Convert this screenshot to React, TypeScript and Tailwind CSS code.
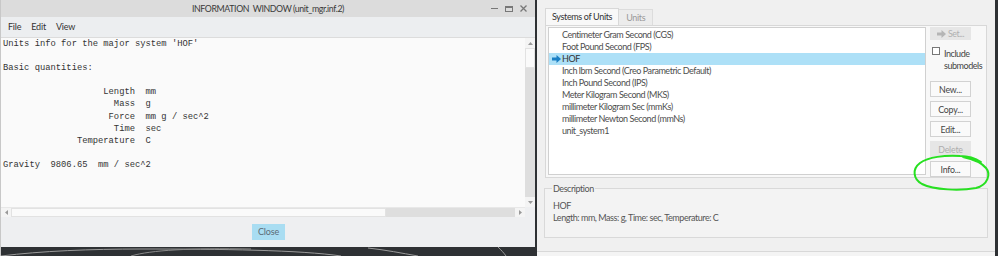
import React from "react";

const mono = { fontFamily: '"Liberation Mono", "DejaVu Sans Mono", monospace' };
const ui = { fontFamily: 'Lato, "Open Sans", sans-serif' };

const infoText = `Units info for the major system 'HOF'

Basic quantities:

                   Length  mm
                     Mass  g
                    Force  mm g / sec^2
                     Time  sec
              Temperature  C

Gravity  9806.65  mm / sec^2`;

function BlueArrow({ color = "#1a7fc4" }: { color?: string }) {
  return (
    <svg width="9" height="8" viewBox="0 0 9 8">
      <path d="M0 2.5 H4.5 V0 L9 4 L4.5 8 V5.5 H0 Z" fill={color} />
    </svg>
  );
}

function LeftWindow() {
  return (
    <div className="w-[535px] h-full flex flex-col shrink-0 border-l border-[#c8c8c8]" style={ui}>
      {/* title bar */}
      <div className="h-[17px] bg-[#dcdcdc] flex items-center relative">
        <div className="flex-1 text-center text-[8.8px] tracking-[-0.4px] text-[#3a3a3a] pl-[44px]">INFORMATION&nbsp;&nbsp;WINDOW (unit_mgr.inf.2)</div>
        <div className="flex items-center gap-[7px] pr-[8px] text-[#666]">
          <div className="w-[7px] h-[1.5px] bg-[#777]" />
          <div className="w-[8px] h-[6px] border border-[#777] border-t-2" />
          <svg width="7" height="7" viewBox="0 0 7 7"><path d="M0.5 0.5 L6.5 6.5 M6.5 0.5 L0.5 6.5" stroke="#777" strokeWidth="1.3" /></svg>
        </div>
      </div>
      {/* menu bar */}
      <div className="h-[21px] bg-[#eceef0] border-b border-[#dcdcdc] flex items-center gap-[10px] pl-[7px] text-[9px] tracking-[-0.2px] text-[#333]">
        <span>File</span>
        <span>Edit</span>
        <span>View</span>
      </div>
      {/* text + vscroll */}
      <div className="flex h-[169px]">
        <div className="flex-1 bg-[#fafafa] pl-[2px] pt-[0px] overflow-hidden">
          <pre className="text-[8.8px] leading-[12.1px] text-[#333]" style={mono}>{infoText}</pre>
        </div>
        <div className="w-[10px] bg-[#dedede] flex flex-col">
          <div className="h-[10px] bg-[#f4f4f4] flex items-center justify-center">
            <svg width="5" height="3" viewBox="0 0 5 3"><path d="M0 3 L2.5 0 L5 3 Z" fill="#999" /></svg>
          </div>
          <div className="h-[20px] bg-[#fafafa] border border-[#e2e2e2]" />
          <div className="flex-1" />
          <div className="h-[10px] bg-[#f4f4f4] flex items-center justify-center">
            <svg width="5" height="3" viewBox="0 0 5 3"><path d="M0 0 L2.5 3 L5 0 Z" fill="#999" /></svg>
          </div>
        </div>
      </div>
      {/* hscroll */}
      <div className="flex h-[10px] bg-[#eeeff1]">
        <div className="w-[524px] flex bg-[#dedede] border-t border-[#e8e8e8]">
          <div className="w-[10px] bg-[#f4f4f4] flex items-center justify-center">
            <svg width="3" height="5" viewBox="0 0 3 5"><path d="M3 0 L0 2.5 L3 5 Z" fill="#999" /></svg>
          </div>
          <div className="w-[375px] bg-[#fafafa] border border-[#e2e2e2]" />
          <div className="flex-1" />
          <div className="w-[10px] bg-[#f4f4f4] flex items-center justify-center">
            <svg width="3" height="5" viewBox="0 0 3 5"><path d="M0 0 L3 2.5 L0 5 Z" fill="#999" /></svg>
          </div>
        </div>
      </div>
      {/* bottom */}
      <div className="h-[30px] bg-[#eeeff1] flex items-center justify-center">
        <div className="w-[33px] h-[16px] bg-[#a9ddf2] text-[9px] tracking-[-0.2px] text-[#5b6b76] flex items-center justify-center ml-[1px]">Close</div>
      </div>
      {/* desktop strip */}
      <div className="flex-1 bg-[#2e3134]">
        <svg width="535" height="9" viewBox="0 0 535 9">
          <path d="M0 9 C 40 4, 90 2, 140 2 C 220 2, 300 3, 340 9" stroke="#9a9a9a" strokeWidth="1" fill="none" />
          <path d="M130 9 C 150 3, 190 1, 250 2" stroke="#8a8a8a" strokeWidth="1" fill="none" />
          <path d="M367 1 C 385 3, 400 6, 417 9" stroke="#9a9a9a" strokeWidth="1" fill="none" />
          <path d="M497 0 C 500 3, 503 6, 505 9" stroke="#9a9a9a" strokeWidth="1" fill="none" />
        </svg>
      </div>
    </div>
  );
}

const units = [
  "Centimeter Gram Second (CGS)",
  "Foot Pound Second (FPS)",
  "HOF",
  "Inch lbm Second (Creo Parametric Default)",
  "Inch Pound Second (IPS)",
  "Meter Kilogram Second (MKS)",
  "millimeter Kilogram Sec (mmKs)",
  "millimeter Newton Second (mmNs)",
  "unit_system1",
];

function Btn({ label, disabled }: { label: string; disabled?: boolean }) {
  return (
    <div
      className={
        disabled
          ? "w-[41px] h-[16px] bg-[#e6e6e6] border border-[#e6e6e6] text-[#adadad] text-[8.8px] tracking-[-0.2px] flex items-center justify-center"
          : "w-[41px] h-[16px] bg-[#fafafa] border border-[#d2d2d2] text-[#444] text-[8.8px] tracking-[-0.2px] flex items-center justify-center"
      }
    >
      {label}
    </div>
  );
}

function RightDialog() {
  return (
    <div className="w-[458px] h-full bg-[#f0f0f0] flex flex-col shrink-0 text-[8.8px] tracking-[-0.45px]" style={ui}>
      <div className="pl-[8px] pr-[8px] pt-[8px] flex flex-col">
        {/* tabs */}
        <div className="flex h-[17px] text-[9px] tracking-[-0.35px]">
          <div className="px-[6px] bg-[#f8f8f8] border border-b-0 border-[#d8d8d8] text-[#333] flex items-center">Systems of Units</div>
          <div className="px-[7px] bg-[#ececec] border-t border-r border-[#dcdcdc] text-[#999] flex items-center mt-[1px]">Units</div>
        </div>
        {/* panel */}
        <div className="h-[153px] bg-[#f8f8f8] border border-[#d8d8d8] flex pl-[2px] pt-[1px] pb-[2px]">
          <div className="w-[378px] h-full bg-white border border-[#d0d0d0] pt-[1px]">
            {units.map((u, i) => (
              <div
                key={u}
                className={
                  "h-[12px] flex items-center text-[9px] text-[#4e4e4e] " + (i === 2 ? "bg-[#ade0f7]" : "")
                }
              >
                <div className="w-[13px] pl-[3px] flex items-center">{i === 2 ? <BlueArrow /> : null}</div>
                <span className={i === 2 ? "text-[#333]" : ""}>{u}</span>
              </div>
            ))}
          </div>
          <div className="flex flex-col pl-[4px] w-[60px]">
            <div className="w-[41px] h-[16px] bg-[#e6e6e6] text-[#b0b0b0] flex items-center justify-center gap-[2px]">
              <BlueArrow color="#b5b5b5" />
              <span>Set...</span>
            </div>
            <div className="flex mt-[6px] ml-[2px] text-[#444] leading-[12px]">
              <div className="w-[8px] h-[8px] border border-[#777] bg-white shrink-0 mt-[1px]" />
              <div className="pl-[4px] pt-[2px] text-[9px]">Include<br />submodels</div>
            </div>
            <div className="flex flex-col gap-[4px] mt-[9px]">
              <Btn label="New..." />
              <Btn label="Copy..." />
              <Btn label="Edit..." />
              <Btn label="Delete" disabled />
              <Btn label="Info..." />
            </div>
          </div>
        </div>
      </div>
      {/* description */}
      <div className="px-[7px] pt-[4px]">
        <fieldset className="h-[56px] border border-[#d9d9d9] bg-[#f3f3f3] px-[8px]">
          <legend className="text-[9px] text-[#555] px-[1px] ml-[-1px]">Description</legend>
          <div className="text-[9px] text-[#555] leading-[12px] pt-[4px]">
            <div>HOF</div>
            <div>Length: mm, Mass: g, Time: sec, Temperature: C</div>
          </div>
        </fieldset>
      </div>
      <div className="flex-1" />
      <div className="h-[5px] border-t border-[#d8d8d8] bg-[#f4f4f4]" />
    </div>
  );
}

export default function App() {
  return (
    <div className="w-[998px] h-[256px] flex bg-[#2e3134] overflow-hidden relative">
      <LeftWindow />
      <div className="w-[2px] shrink-0 bg-[#2e3134]" />
      <RightDialog />
      <div className="flex-1 bg-[#2e3134]" />
      <svg className="absolute left-0 top-0 pointer-events-none" width="998" height="256" viewBox="0 0 998 256">
        <path
          d="M981 162 C 975 158, 968 156, 960 156 C 945 155, 928 157, 920 163 C 912 169, 913 179, 922 184 C 934 190, 960 191, 976 188 C 988 185, 991 174, 986 168 C 982 163, 972 159, 963 157"
          stroke="#27e021"
          strokeWidth="2"
          fill="none"
          strokeLinecap="round"
        />
      </svg>
    </div>
  );
}
